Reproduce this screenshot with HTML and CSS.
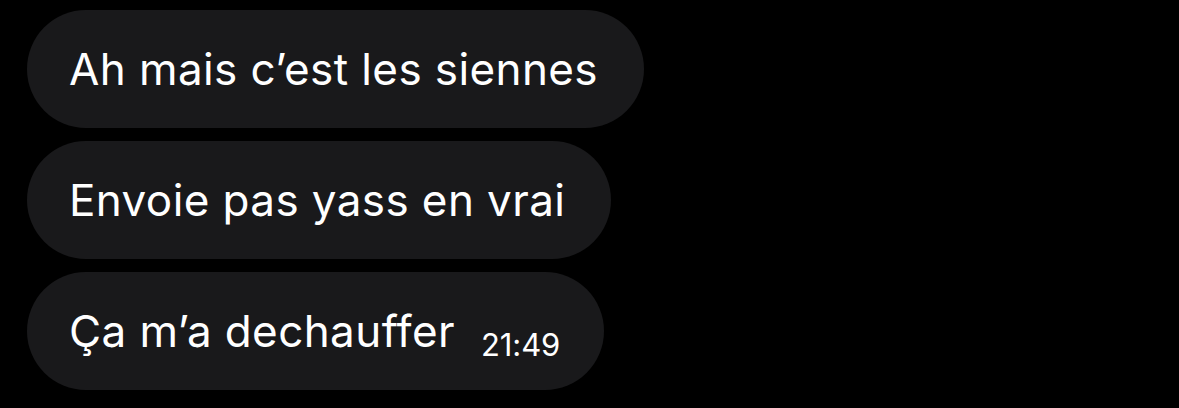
FILE: index.html
```html
<!DOCTYPE html>
<html lang="fr">
<head>
<meta charset="utf-8">
<link rel="stylesheet" href="styles.css">
</head>
<body>
<div class="thread">
  <div class="bubble"><span class="text">Ah mais c’est les siennes</span></div>
  <div class="bubble"><span class="text">Envoie pas yass en vrai</span></div>
  <div class="bubble last"><span class="text">Ça m’a dechauffer</span><span class="time">21:49</span></div>
</div>
</body>
</html>
```
FILE: styles.css
```css
html, body {
  margin: 0;
  padding: 0;
  background: #000;
  width: 1179px;
  height: 408px;
  overflow: hidden;
}
.thread {
  display: flex;
  flex-direction: column;
  align-items: flex-start;
  gap: 13px;
  padding: 10px 0 0 27px;
  font-family: "Inter", "Roboto", sans-serif;
  color: #fff;
}
.bubble {
  display: flex;
  align-items: center;
  height: 118px;
  box-sizing: border-box;
  padding: 0 46px 0 42px;
  border-radius: 59px;
  background: #19191b;
}
.text {
  font-size: 44px;
  line-height: 1;
  letter-spacing: 0.4px;
}
.last { padding-right: 44px; }
.time {
  font-size: 31px;
  margin-left: 26px;
  margin-top: 26px;
  letter-spacing: -0.1px;
}
```
